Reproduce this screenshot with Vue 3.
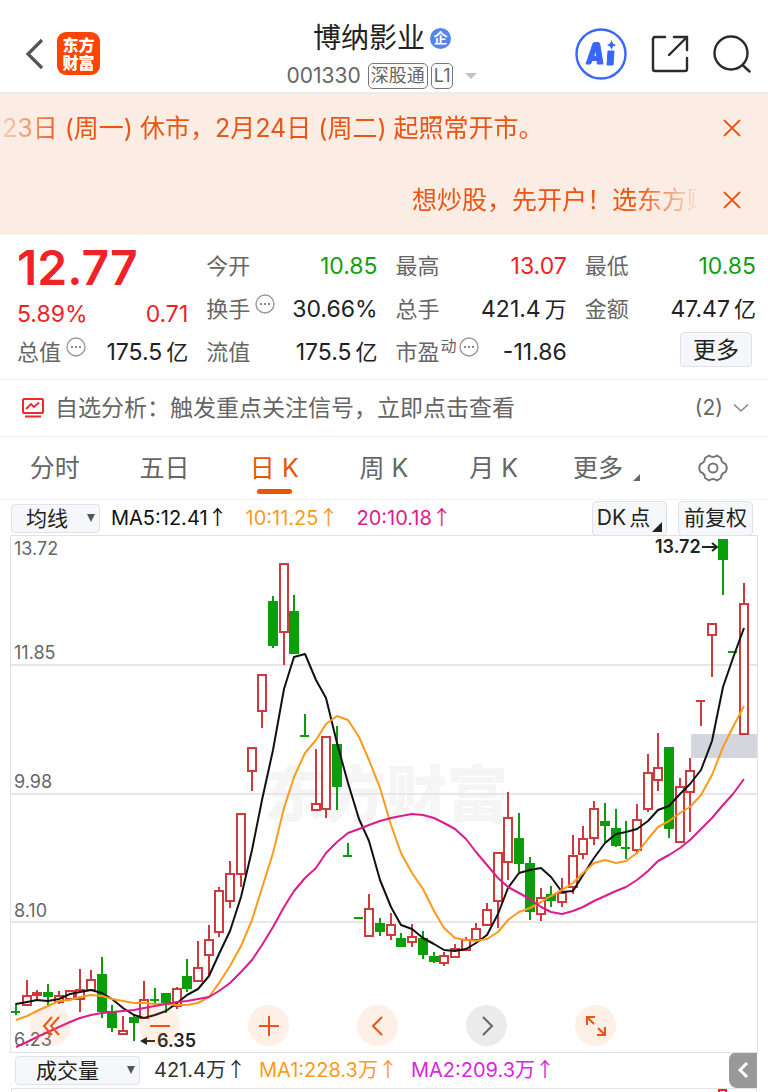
<template>
  <div class="page">

    <!-- HEADER -->
    <header class="header">
      <div class="header-left">
        <button class="icon-btn" aria-label="返回">
          <svg width="20" height="34" viewBox="0 0 20 34">
            <path d="M17 3 L3 17 L17 31" fill="none" stroke="#555" stroke-width="3.2" />
          </svg>
        </button>
        <a class="logo" href="#"><span>东方</span><span>财富</span></a>
      </div>

      <div class="header-title">
        <h1>博纳影业<span class="corp">企</span></h1>
        <div class="code">
          <span class="code-num">001330</span>
          <span class="tag">深股通</span>
          <span class="tag">L1</span>
          <span class="drop"></span>
        </div>
      </div>

      <div class="header-right">
        <button class="icon-btn" aria-label="Ai">
          <svg width="52" height="52" viewBox="0 0 52 52">
            <circle cx="26" cy="26" r="24.5" fill="#fff" stroke="#3a66fb" stroke-width="2.4" />
            <path
              d="M11 36 L18 15.500 Q18.500 14.500 19.500 14.500 H23 Q24.500 14.500 24.700 16 L28 36 H22.300 L22 32.500 H17 L15.500 36 Z M18.600 28.500 H21.500 L20.800 22 Z"
              fill="#3a66fb" stroke="#3a66fb" stroke-linejoin="round" fill-rule="evenodd"
            />
            <path d="M33 23 H39 L38 37 H32 Z" fill="#3a66fb" stroke="#3a66fb" stroke-linejoin="round" />
            <path d="M36.500 12 L38 15.500 L41 17 L38 18.500 L36.500 21.500 L35 18.500 L32 17 L35 15.500 Z" fill="#3a66fb" />
          </svg>
        </button>
        <button class="icon-btn" aria-label="分享">
          <svg width="38" height="38" viewBox="0 0 38 38" fill="none" stroke="#2b2b2b" stroke-width="2.4" stroke-linecap="round">
            <path d="M14 2 H4 Q2 2 2 4 V34 Q2 36 4 36 H34 Q36 36 36 34 V23" />
            <path d="M23 2 H36 V15 M35 3 L18 20" />
          </svg>
        </button>
        <button class="icon-btn" aria-label="搜索">
          <svg width="38" height="38" viewBox="0 0 38 38" fill="none" stroke="#2b2b2b" stroke-width="2.4" stroke-linecap="round">
            <circle cx="18" cy="18" r="16.500" />
            <path d="M29.500 30 L36.500 36.500" />
          </svg>
        </button>
      </div>
    </header>

    <!-- NOTICES -->
    <div class="notices">
      <div class="notice">
        <p class="fade-left">23日 (周一) 休市，2月24日 (周二) 起照常开市。</p>
        <button class="icon-btn" aria-label="关闭">
          <svg width="20" height="20" viewBox="0 0 20 20">
            <path d="M2 2 L18 18 M18 2 L2 18" stroke="#ea5514" stroke-width="1.800" />
          </svg>
        </button>
      </div>
      <div class="notice">
        <p class="fade-right">想炒股，先开户！选东方财富</p>
        <button class="icon-btn" aria-label="关闭">
          <svg width="20" height="20" viewBox="0 0 20 20">
            <path d="M2 2 L18 18 M18 2 L2 18" stroke="#ea5514" stroke-width="1.800" />
          </svg>
        </button>
      </div>
    </div>

    <!-- QUOTE -->
    <section class="quote">
      <div class="col">
        <div class="price">12.77</div>
        <div class="change"><span>5.89%</span><span>0.71</span></div>
        <div class="cell">
          <span class="label">总值</span>
          <svg class="dots" width="20" height="20" viewBox="0 0 20 20">
            <circle cx="10" cy="10" r="9" fill="none" stroke="#999" stroke-width="1.400" />
            <path d="M5 10 h2 M9 10 h2 M13 10 h2" stroke="#888" stroke-width="2" />
          </svg>
          <span class="value">175.5<i>亿</i></span>
        </div>
      </div>
      <div v-for="(col, c) in quote" :key="c" class="col">
        <div v-for="item in col" :key="item.label" class="cell">
          <span class="label">{{ item.label }}</span>
          <span v-if="item.sup" class="sup">{{ item.sup }}</span>
          <svg v-if="item.tip" class="dots" width="20" height="20" viewBox="0 0 20 20">
            <circle cx="10" cy="10" r="9" fill="none" stroke="#999" stroke-width="1.400" />
            <path d="M5 10 h2 M9 10 h2 M13 10 h2" stroke="#888" stroke-width="2" />
          </svg>
          <span class="value" :class="item.color">{{ item.value }}<i v-if="item.unit">{{ item.unit }}</i></span>
        </div>
        <div v-if="c === 2" class="cell cell-more">
          <button class="more">更多</button>
        </div>
      </div>
    </section>

    <!-- ANALYSIS -->
    <a class="analysis" href="#">
      <svg width="22" height="20" viewBox="0 0 22 20" fill="none" stroke="#f02828" stroke-width="2">
        <rect x="1" y="1" width="20" height="14" rx="1" />
        <path d="M4 11 L9 6 L12 9 L17 4.500 M3 18.500 H19" stroke-width="1.800" />
      </svg>
      <span class="analysis-text">自选分析：触发重点关注信号，立即点击查看</span>
      <span>(2)</span>
      <svg width="16" height="10" viewBox="0 0 16 10">
        <path d="M1 1.500 L8 8 L15 1.500" fill="none" stroke="#888" stroke-width="1.600" />
      </svg>
    </a>

    <!-- TABS -->
    <nav class="tabs">
      <button
        v-for="tab in tabs"
        :key="tab"
        :class="{ active: tab === current }"
        @click="current = tab"
      >{{ tab }}</button>
      <button class="tab-more">更多<span class="corner"></span></button>
      <button aria-label="设置">
        <svg width="30" height="28" viewBox="0 0 30 28" fill="none" stroke="#777" stroke-width="2" stroke-linejoin="round">
          <path d="M11 1.500 Q15 4.500 19 1.500 L23 4 Q23 8.500 27.500 10 Q30 14 27.500 18 Q23 19.500 23 24 L19 26.500 Q15 23.500 11 26.500 L7 24 Q7 19.500 2.500 18 Q0 14 2.500 10 Q7 8.500 7 4 Z" />
          <circle cx="15" cy="14" r="4.500" />
        </svg>
      </button>
    </nav>

    <!-- MA BAR -->
    <div class="bar">
      <div class="select">
        <select aria-label="主图指标"><option>均线</option></select>
      </div>
      <div class="legend">
        <span>MA5:12.41<b>↑</b></span>
        <span class="orange">10:11.25<b>↑</b></span>
        <span class="pink">20:10.18<b>↑</b></span>
      </div>
      <div class="bar-btns">
        <button class="dk">DK<i>点</i><span class="corner dark"></span></button>
        <button>前复权</button>
      </div>
    </div>

    <!-- CHART -->
    <div class="chart">
      <svg class="plot" viewBox="11 536 746 516">
        <text class="mark" x="264" y="817">东方财富</text>
        <path class="grid" d="M11 665 H757 M11 794 H757 M11 922 H757" />
        <rect x="691" y="734" width="66" height="24" fill="#d5d5dd" />

        <text v-for="s in scale" :key="s[0]" class="scale" x="14" :y="s[1]">{{ s[0] }}</text>

        <g v-for="(k, i) in candles" :key="i" :class="k[0] === 'r' ? 'up' : 'down'">
          <path v-if="k[1] < k[2]" :d="`M${px(i)} ${k[1]} V${k[2]}`" />
          <path v-if="k[4] > k[3]" :d="`M${px(i)} ${k[3]} V${k[4]}`" />
          <rect v-if="k[3] > k[2]" :x="px(i) - 4" :y="k[2]" width="8" :height="k[3] - k[2]" />
          <path v-else :d="`M${px(i) - 5} ${k[2]} h9`" />
        </g>

        <polyline class="line" stroke="#111" :points="points(ma5)" />
        <polyline class="line" stroke="#fb9a1c" :points="points(ma10)" />
        <polyline class="line" stroke="#dd1b8c" :points="points(ma20)" />

        <text class="peak" x="655" y="553">13.72</text>
        <path d="M702 547 H716 M712 543 L717 547 L712 551" fill="none" stroke="#222" stroke-width="2" />
        <text class="peak" x="157" y="1047">6.35</text>
        <path d="M155 1041 H142" stroke="#222" stroke-width="2" />
        <path d="M140 1041 L147 1037 V1045 Z" fill="#222" />
      </svg>

      <div class="controls">
        <button aria-label="最早">
          <svg width="20" height="22" viewBox="0 0 20 22"><path d="M11 2 L3 11 L11 20 M18 2 L10 11 L18 20" /></svg>
        </button>
        <button aria-label="缩小">
          <svg width="20" height="20" viewBox="0 0 20 20"><path d="M0 10 H20" /></svg>
        </button>
        <button aria-label="放大">
          <svg width="20" height="20" viewBox="0 0 20 20"><path d="M0 10 H20 M10 0 V20" /></svg>
        </button>
        <button aria-label="左移">
          <svg width="20" height="20" viewBox="0 0 20 20"><path d="M14 1 L5 10 L14 19" /></svg>
        </button>
        <button class="off" aria-label="右移">
          <svg width="20" height="20" viewBox="0 0 20 20"><path d="M6 1 L15 10 L6 19" /></svg>
        </button>
        <button aria-label="全屏">
          <svg width="22" height="22" viewBox="0 0 22 22"><path d="M2 10 V2 H10 M2 2 L9 9 M20 12 V20 H12 M20 20 L13 13" /></svg>
        </button>
      </div>
    </div>

    <!-- VOLUME BAR -->
    <div class="bar volume">
      <div class="select wide">
        <select aria-label="副图指标"><option>成交量</option></select>
      </div>
      <div class="legend">
        <span class="dark-text">421.4万<b>↑</b></span>
        <span class="orange">MA1:228.3万<b>↑</b></span>
        <span class="purple">MA2:209.3万<b>↑</b></span>
      </div>
      <button class="unfold" aria-label="展开">
        <svg width="12" height="18" viewBox="0 0 12 18">
          <path d="M10 2 L3 9 L10 16" fill="none" stroke="#fff" stroke-width="3" />
        </svg>
      </button>
    </div>
    <div class="volume-plot"><span class="vol"></span></div>

  </div>
</template>

<script setup>
import { ref } from 'vue'

const tabs = ['分时', '五日', '日 K', '周 K', '月 K']
const current = ref('日 K')

const quote = [
  [
    { label: '今开', value: '10.85', color: 'green' },
    { label: '换手', value: '30.66%', tip: true },
    { label: '流值', value: '175.5', unit: '亿' }
  ],
  [
    { label: '最高', value: '13.07', color: 'red' },
    { label: '总手', value: '421.4', unit: '万' },
    { label: '市盈', value: '-11.86', sup: '动', tip: true }
  ],
  [
    { label: '最低', value: '10.85', color: 'green' },
    { label: '金额', value: '47.47', unit: '亿' }
  ]
]

const scale = [['13.72', 555], ['11.85', 659], ['9.98', 788], ['8.10', 917], ['6.23', 1046]]

/* color, high, body top, body bottom, low */
const candles = [
  ['g', 1003, 1012, 1012, 1015], ['r', 980, 996, 1005, 1005], ['r', 990, 993, 995, 1000],
  ['g', 984, 993, 996, 1005], ['r', 991, 996, 1002, 1004], ['r', 990, 991, 999, 1000],
  ['r', 969, 990, 999, 1012], ['r', 970, 980, 990, 990], ['g', 957, 975, 1011, 1018],
  ['g', 1005, 1012, 1027, 1032], ['r', 1016, 1031, 1034, 1034], ['g', 1014, 1018, 1022, 1041],
  ['r', 981, 1000, 1018, 1018], ['g', 988, 1000, 1000, 1004], ['g', 993, 994, 1004, 1013],
  ['r', 987, 989, 1006, 1009], ['g', 959, 977, 988, 992], ['r', 941, 968, 981, 981],
  ['r', 925, 940, 955, 975], ['r', 887, 891, 932, 937], ['r', 861, 874, 901, 908],
  ['r', 814, 814, 874, 887], ['r', 748, 748, 771, 791], ['r', 675, 675, 711, 728],
  ['g', 596, 602, 645, 648], ['r', 564, 564, 632, 665], ['g', 595, 612, 653, 653],
  ['g', 714, 736, 736, 736], ['r', 749, 804, 810, 810], ['r', 737, 737, 809, 818],
  ['g', 726, 745, 786, 810], ['g', 843, 856, 856, 856], ['g', 918, 918, 918, 918],
  ['r', 894, 909, 936, 936], ['g', 918, 924, 931, 936], ['r', 913, 925, 935, 940],
  ['g', 933, 939, 946, 946], ['r', 924, 937, 942, 947], ['g', 931, 939, 954, 959],
  ['g', 952, 957, 961, 963], ['r', 952, 956, 963, 966], ['r', 944, 949, 957, 958],
  ['r', 937, 940, 950, 950], ['r', 923, 929, 940, 942], ['r', 903, 910, 925, 925],
  ['r', 853, 853, 901, 928], ['r', 792, 818, 862, 880], ['g', 813, 839, 863, 872],
  ['g', 857, 864, 911, 920], ['r', 888, 898, 914, 921], ['g', 886, 895, 900, 907],
  ['r', 878, 893, 902, 907], ['r', 835, 856, 887, 894], ['r', 826, 839, 854, 859],
  ['r', 801, 809, 838, 845], ['g', 803, 822, 825, 843], ['g', 809, 829, 845, 847],
  ['g', 821, 848, 848, 859], ['r', 804, 820, 850, 854], ['r', 754, 773, 809, 812],
  ['r', 733, 768, 780, 791], ['g', 748, 748, 828, 838], ['r', 778, 787, 842, 842],
  ['r', 758, 771, 792, 832], ['r', 701, 701, 701, 726], ['r', 624, 624, 635, 677],
  ['g', 540, 540, 559, 595], ['g', 652, 652, 652, 652], ['r', 583, 604, 734, 734]
]

const ma5 = [
  1004, 1002, 1000, 1001, 999, 994, 992, 990, 993, 999, 1008, 1015, 1018, 1015, 1011, 1003, 995, 989, 976, 954,
  931, 897, 850, 800, 750, 689, 657, 654, 680, 698, 743, 783, 819, 841, 880, 907, 925, 929, 938, 944,
  950, 951, 949, 943, 935, 914, 888, 873, 870, 868, 877, 892, 891, 875, 858, 843, 834, 832, 829, 821,
  810, 806, 794, 784, 770, 741, 687, 658, 628
]

const ma10 = [
  1020, 1016, 1011, 1006, 1001, 1000, 997, 995, 996, 999, 1001, 1003, 1003, 1004, 1004, 1005, 1005, 1003, 997, 983,
  966, 946, 920, 888, 853, 808, 777, 753, 740, 724, 716, 720, 737, 760, 788, 825, 853, 873, 889, 911,
  928, 938, 940, 941, 939, 932, 920, 912, 908, 902, 896, 890, 883, 873, 863, 860, 863, 861, 853, 839,
  827, 821, 813, 807, 795, 775, 747, 727, 706
]

const ma20 = [
  1047, 1042, 1037, 1032, 1027, 1022, 1018, 1015, 1013, 1012, 1011, 1010, 1008, 1006, 1004, 1002, 1001, 999, 997, 991,
  983, 972, 960, 945, 927, 907, 891, 878, 868, 853, 842, 833, 829, 825, 821, 818, 816, 814, 815, 818,
  823, 829, 839, 852, 865, 878, 887, 893, 899, 907, 912, 914, 911, 907, 901, 896, 891, 887, 880, 871,
  861, 855, 848, 840, 829, 818, 805, 794, 779
]

/* x of the candle with index i */
const px = (i) => Math.round(16 + i * 10.706)

const points = (list) => list.map((y, i) => `${px(i)},${y}`).join(' ')
</script>

<style>
body {
  margin: 0;
  background: #fff;
}
</style>

<style scoped>
.page {
  font-family: Inter, "Noto Sans CJK SC", sans-serif;
  line-height: 28px;
  color: #222;
  overflow: hidden;
}

button {
  font-family: inherit;
  line-height: inherit;
  color: inherit;
  padding: 0;
  border: none;
  background: none;
  cursor: pointer;
}

i {
  font-style: normal;
}

svg {
  display: block;
  flex: none;
}

/* header */
.header {
  display: grid;
  grid-template-columns: 1fr auto 1fr;
  height: 92px;
  border-bottom: 2px solid #ececec;
}

.header-left,
.header-right {
  display: flex;
  align-items: center;
  padding-top: 13px;
}

.header-left {
  padding-left: 25px;
  gap: 12px;
}

.header-right {
  justify-content: flex-end;
  padding-right: 17px;
  gap: 24px;
}

.logo {
  display: flex;
  flex-direction: column;
  align-items: center;
  justify-content: center;
  width: 43px;
  height: 43px;
  border-radius: 9px;
  background: #ff4400;
  color: #fff;
  font-size: 16px;
  font-weight: 900;
  line-height: 18px;
  text-decoration: none;
}

.header-title {
  display: flex;
  flex-direction: column;
  align-items: center;
  padding: 18px 4px 0 0;
}

h1 {
  display: flex;
  align-items: center;
  gap: 5px;
  margin: 0;
  font-size: 28px;
  font-weight: 400;
  line-height: 40px;
}

.corp {
  width: 21px;
  height: 21px;
  border-radius: 50%;
  background: #5485e8;
  color: #fff;
  font-size: 14px;
  font-weight: 700;
  line-height: 20px;
  text-align: center;
}

.code {
  display: flex;
  align-items: center;
  gap: 3px;
  height: 36px;
  color: #666;
}

.code-num {
  margin-right: 4px;
  font-size: 21px;
}

.tag {
  padding: 0 2px;
  border: 1px solid #777;
  border-radius: 5px;
  font-size: 18px;
  line-height: 24px;
}

.drop {
  margin-left: 9px;
  border: 6px solid transparent;
  border-top-color: #c4c4c4;
  border-bottom: none;
}

/* notices */
.notices {
  background: #fbede4;
  color: #ea5514;
}

.notice {
  display: flex;
  align-items: center;
  justify-content: space-between;
  height: 70px;
  padding: 0 26px 0 2px;
}

.notice:first-child {
  height: 68px;
  padding-bottom: 3px;
}

.notice p {
  margin: 0;
  overflow: hidden;
  font-size: 25px;
  line-height: 36px;
  white-space: nowrap;
}

.fade-left {
  mask-image: linear-gradient(to right, rgba(0, 0, 0, 0.2), #000 60px);
}

.notice .fade-right {
  width: 284px;
  margin: 0 26px 0 auto;
  mask-image: linear-gradient(to left, rgba(0, 0, 0, 0.1), #000 60px);
}

/* quote */
.quote {
  display: grid;
  grid-template-columns: repeat(4, 1fr);
  gap: 18px;
  padding: 9px 12px 6px 17px;
  border-bottom: 1px solid #eee;
}

.price {
  height: 53px;
  color: #f02228;
  font-size: 48px;
  font-weight: 600;
  line-height: 48px;
}

.change {
  display: flex;
  align-items: center;
  justify-content: space-between;
  height: 33px;
  color: #f02228;
  font-size: 23px;
}

.cell {
  display: flex;
  align-items: center;
  height: 43px;
  font-size: 23px;
}

.label {
  color: #666;
  font-size: 22px;
}

.sup {
  margin: 0 2px 12px 1px;
  color: #666;
  font-size: 16px;
}

.dots {
  margin: 0 0 10px 5px;
}

.sup + .dots {
  margin-left: 0;
}

.value {
  margin-left: auto;
}

.value i {
  margin-left: 4px;
  font-size: 22px;
}

.green {
  color: #10a010;
}

.red {
  color: #f02228;
}

.cell-more {
  justify-content: flex-end;
  padding: 0 4px 4px 0;
  height: 39px;
}

.more {
  width: 72px;
  height: 35px;
  border: 1px solid #dfe2e7;
  border-radius: 4px;
  background: #f6f7fa;
  font-size: 23px;
}

/* analysis */
.analysis {
  display: flex;
  align-items: center;
  height: 56px;
  padding: 0 19px 0 22px;
  border-bottom: 1px solid #eee;
  color: #666;
  font-size: 21px;
  text-decoration: none;
}

.analysis-text {
  flex: 1;
  margin-left: 11px;
  font-size: 23px;
}

.analysis svg:last-child {
  margin-left: 10px;
}

/* tabs */
.tabs {
  display: grid;
  grid-template-columns: repeat(7, 1fr);
  height: 62px;
  border-bottom: 1px solid #f3f3f3;
}

.tabs button {
  position: relative;
  display: flex;
  align-items: center;
  justify-content: center;
  color: #666;
  font-size: 25px;
  white-space: pre;
}

.tabs .tab-more {
  padding-left: 6px;
}

.tabs .active {
  color: #ea5504;
}

.active::after {
  content: "";
  position: absolute;
  bottom: 5px;
  width: 35px;
  height: 5px;
  border-radius: 3px;
  background: #ea5504;
}

.corner {
  margin: 18px 0 0 10px;
  border-bottom: 7px solid #666;
  border-left: 7px solid transparent;
}

/* indicator bars */
.bar {
  display: flex;
  align-items: center;
  height: 36px;
  padding: 0 11px;
}

.select {
  position: relative;
  width: 89px;
}

.select::after {
  content: "";
  position: absolute;
  right: 5px;
  top: 10px;
  border: 4px solid transparent;
  border-top: 8px solid #555;
  border-bottom: none;
  pointer-events: none;
}

.select select {
  appearance: none;
  display: block;
  width: 100%;
  height: 29px;
  padding: 0 0 0 14px;
  border: 1px solid #dfe2e7;
  border-radius: 4px;
  background: #f6f7fa;
  color: #222;
  font-family: inherit;
  font-size: 21px;
  line-height: 27px;
}

.select.wide {
  width: 125px;
}

.select.wide select {
  padding-left: 20px;
}

.legend {
  display: flex;
  flex: 1;
  gap: 18px;
  margin-left: 11px;
  color: #111;
  font-size: 20px;
  white-space: nowrap;
}

.legend b {
  font-family: "Noto Sans CJK SC", sans-serif;
  font-weight: 400;
  line-height: 20px;
}

.legend .orange {
  color: #fb9a1c;
}

.legend .pink {
  color: #dd1b8c;
}

.legend .purple {
  color: #d926e0;
}

.legend .dark-text {
  color: #333;
}

.bar-btns {
  display: flex;
  gap: 11px;
  margin-right: 4px;
}

.bar-btns button {
  display: flex;
  align-items: center;
  justify-content: center;
  width: 75px;
  height: 35px;
  border: 1px solid #dfe2e7;
  border-radius: 4px;
  background: #f6f7fa;
  font-size: 21px;
}

.dk {
  position: relative;
}

.dk i {
  margin: 0 12px 0 3px;
}

.dark {
  position: absolute;
  right: 4px;
  bottom: 3px;
  margin: 0;
  border-bottom: 10px solid #222;
  border-left: 10px solid transparent;
}

/* chart */
.chart {
  position: relative;
  margin: 0 11px;
  box-shadow: 0 0 0 1px #e2e2e6;
}

.plot {
  width: 100%;
  height: auto;
}

.mark {
  fill: #f5f5f5;
  font-size: 61px;
  font-weight: 900;
}

.grid {
  stroke: #e6e7ee;
  stroke-width: 2;
}

.scale {
  fill: #666;
  font-size: 18px;
}

.peak {
  fill: #222;
  font-size: 18px;
  font-weight: 600;
}

.up {
  fill: #fff;
  stroke: #d03a3c;
  stroke-width: 2;
}

.down {
  fill: #0a9f0a;
  stroke: #0a9f0a;
  stroke-width: 2;
}

.line {
  fill: none;
  stroke-width: 2;
  stroke-linejoin: round;
}

.controls {
  position: absolute;
  right: 141px;
  bottom: 6px;
  left: 19px;
  display: flex;
  justify-content: space-between;
}

.controls button {
  display: flex;
  align-items: center;
  justify-content: center;
  width: 41px;
  height: 41px;
  border-radius: 50%;
  background: rgba(245, 130, 70, 0.13);
}

.controls path {
  fill: none;
  stroke: #ea5514;
  stroke-width: 2;
}

.controls .off {
  background: #ebebeb;
}

.controls .off path {
  stroke: #666;
}

/* volume */
.volume {
  padding-left: 15px;
}

.volume .legend {
  margin-left: 14px;
  gap: 13px;
}

.unfold {
  display: flex;
  align-items: center;
  justify-content: center;
  width: 28px;
  height: 36px;
  border-radius: 8px 0 0 8px;
  background: #999;
}

.volume-plot {
  display: flex;
  justify-content: flex-end;
  height: 3px;
  margin: 0 11px;
  border: 1px solid #e2e2e6;
  border-bottom: none;
}

.vol {
  width: 5px;
  margin-right: 29px;
  border: 2px solid #f02228;
  border-bottom: none;
}
</style>
